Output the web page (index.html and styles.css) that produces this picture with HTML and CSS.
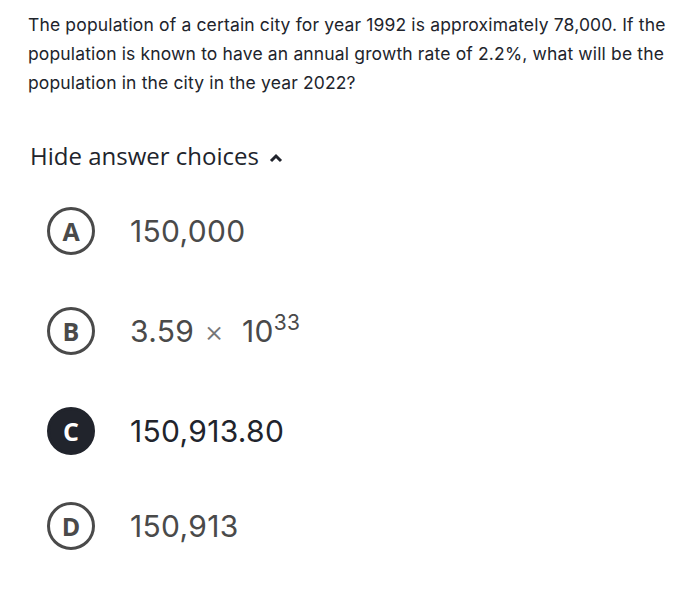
FILE: index.html
```html
<!DOCTYPE html>
<html>
<head>
<meta charset="utf-8">
<link rel="stylesheet" href="styles.css">
</head>
<body>
<div class="page">
  <p class="question">The population of a certain city for year 1992 is approximately 78,000. If the population is known to have an annual growth rate of 2.2%, what will be the population in the city in the year 2022?</p>
  <div class="toggle">Hide answer choices
    <svg class="chev" width="14" height="10" viewBox="0 0 14 10"><path d="M2 8 L7 3 L12 8" fill="none" stroke="#21242c" stroke-width="3"/></svg>
  </div>
  <ul class="choices">
    <li class="choice"><span class="badge">A</span><span class="val">150,000</span></li>
    <li class="choice"><span class="badge">B</span><span class="val">3.59<span class="times">×</span>10<sup>33</sup></span></li>
    <li class="choice"><span class="badge selected">C</span><span class="val dark">150,913.80</span></li>
    <li class="choice last"><span class="badge">D</span><span class="val">150,913</span></li>
  </ul>
</div>
</body>
</html>
```
FILE: styles.css
```css
html, body { margin: 0; padding: 0; background: #fff; }
.page { padding: 10px 10px 0 28px; }
.question {
  margin: 0;
  font-family: Inter, sans-serif;
  font-size: 17.5px;
  line-height: 29px;
  letter-spacing: 0.15px;
  color: #21242c;
}
.toggle {
  margin-top: 42px;
  font-family: "Open Sans", sans-serif;
  font-size: 24px;
  color: #21242c;
  display: flex;
  align-items: center;
  gap: 10px;
  padding-left: 2px;
}
.chev { margin-top: 4px; }
.choices { list-style: none; margin: 35px 0 0 0; padding: 0 0 0 19px; }
.choice { display: flex; align-items: center; height: 48px; margin-bottom: 52px; }
.choice.last { margin-top: -5px; }
.badge {
  box-sizing: border-box;
  width: 48px; height: 48px;
  border: 3px solid #4a4a4a;
  border-radius: 50%;
  display: flex; align-items: center; justify-content: center;
  font-family: "Open Sans", sans-serif;
  font-weight: 700;
  font-size: 25px;
  color: #4a4a4a;
}
.badge.selected { background: #21242c; border-color: #21242c; color: #fff; }
.val {
  margin-left: 35px;
  font-family: Inter, sans-serif;
  font-size: 30px;
  letter-spacing: 0.3px;
  color: #4a4a4a;
}
.val.dark { color: #21242c; }
.times { font-size: 30px; font-weight: 300; margin: 0 18px 0 10px; color: #777; }
sup { font-size: 21px; vertical-align: 12px; line-height: 0; }
```
